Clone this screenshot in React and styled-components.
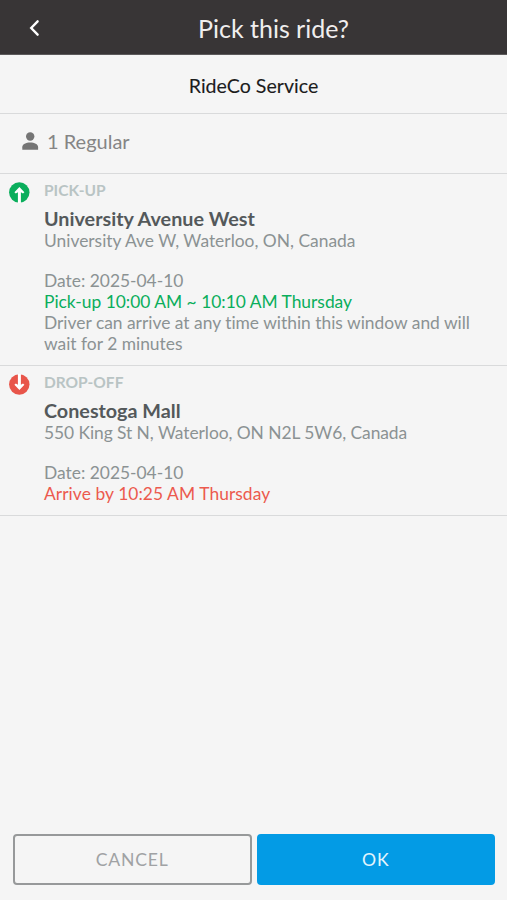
import React from "react";
import styled, { createGlobalStyle } from "styled-components";

const GlobalStyle = createGlobalStyle`
  * {
    box-sizing: border-box;
  }
  body {
    margin: 0;
    background: #f5f5f5;
    font-family: Lato, "Liberation Sans", sans-serif;
    font-variant-ligatures: none;
    color: #8b9293;
  }
`;

const Screen = styled.div`
  display: flex;
  flex-direction: column;
  width: 100%;
  height: 100vh;
`;

const Header = styled.header`
  display: grid;
  grid-template-columns: 40px 1fr;
  align-items: center;
  height: 55px;
  border-bottom: 1px solid #5c5a5b;
  background: #383536;
  color: #f0eeee;
`;

const BackButton = styled.button`
  display: flex;
  padding: 1px 0 0 29px;
  border: 0;
  background: none;
  color: #fff;
`;

const Title = styled.h1`
  margin: 2px 0 0;
  text-align: center;
  font-size: 25px;
  font-weight: 400;
  line-height: 30px;
`;

const Service = styled.div`
  display: flex;
  align-items: center;
  justify-content: center;
  height: 59px;
  padding-top: 3px;
  border-bottom: 1px solid #d9dadb;
  font-size: 19.6px;
  color: #1c1c1c;
  -webkit-text-stroke: 0.1px #1c1c1c;
`;

const Passengers = styled.div`
  display: flex;
  align-items: center;
  gap: 8px;
  height: 60px;
  padding: 0 22px 5px;
  border-bottom: 1px solid #d9dadb;
  font-size: 20px;
  color: #858585;
`;

const Stop = styled.section`
  display: flex;
  height: ${props => props.height};
  padding: 6px 9px 0;
  border-bottom: 1px solid #d9dadb;
`;

const StopIcon = styled.div`
  width: 35px;
  padding-top: 2px;
`;

const StopBody = styled.div`
  flex: 1;
  font-size: 17.4px;
  line-height: 21px;
`;

const StopLabel = styled.div`
  height: 27px;
  font-size: 15.5px;
  font-weight: 700;
  color: #b9c4c4;
`;

const Place = styled.h2`
  margin: 0;
  font-size: 19.75px;
  font-weight: 700;
  line-height: 23px;
  color: #54595b;
`;

const Address = styled.div`
  margin-bottom: 19px;
  letter-spacing: ${props => props.spacing || "normal"};
`;

const Time = styled.div`
  color: ${props => props.color};
  letter-spacing: ${props => props.spacing || "normal"};
`;

const Footer = styled.footer`
  display: flex;
  gap: 5px;
  margin-top: auto;
  padding: 0 12px 15px 13px;
`;

const Button = styled.button`
  flex: 1;
  height: 51px;
  padding: 0;
  border: 2px solid ${props => (props.primary ? "#039be5" : "#97999a")};
  border-radius: 4px;
  background: ${props => (props.primary ? "#039be5" : "transparent")};
  color: ${props => (props.primary ? "#e4f5fd" : "#a0a2a4")};
  font: 400 17.6px Lato, sans-serif;
  letter-spacing: 0.8px;
`;

const ArrowIcon = ({ color, down }) => (
  <svg width="21" height="21" viewBox="0 0 21 21">
    <circle cx="10.3" cy="10.5" r="10.2" fill={color} />
    <g transform={down ? "rotate(180 10.4 10.5)" : undefined} fill="#fff">
      <path d="M8.9 21V10.2L6.8 11.6L5.4 10.2L10.4 5L15.4 10.2L14 11.6L11.9 10.2V21Z" />
    </g>
  </svg>
);

const App = () => (
  <>
    <GlobalStyle />
    <Screen>
      <Header>
        <BackButton aria-label="Back">
          <svg width="14" height="22" viewBox="0 0 14 22" fill="none">
            <path
              d="M11 2.5L2.8 11L11 19.5"
              stroke="#fff"
              strokeWidth="3"
              strokeLinecap="round"
            />
          </svg>
        </BackButton>
        <Title>Pick this ride?</Title>
      </Header>
      <Service>RideCo Service</Service>
      <Passengers>
        <svg width="17" height="18" viewBox="0 0 17 18" fill="#757575">
          <circle cx="8.2" cy="4.5" r="4.2" />
          <path d="M0.3 17.7V15.2C0.3 12.3 4 10.6 8.2 10.6S16.1 12.3 16.1 15.2V17.7Z" />
        </svg>
        <span>1 Regular</span>
      </Passengers>
      <Stop height="192px">
        <StopIcon>
          <ArrowIcon color="#0aae5c" />
        </StopIcon>
        <StopBody>
          <StopLabel>PICK-UP</StopLabel>
          <Place>University Avenue West</Place>
          <Address>University Ave W, Waterloo, ON, Canada</Address>
          <div>Date: 2025-04-10</div>
          <Time color="#0aae5c">Pick-up 10:00 AM ~ 10:10 AM Thursday</Time>
          <div>
            Driver can arrive at any time within this window and will wait for 2
            minutes
          </div>
        </StopBody>
      </Stop>
      <Stop height="150px">
        <StopIcon>
          <ArrowIcon color="#e8554a" down />
        </StopIcon>
        <StopBody>
          <StopLabel>DROP-OFF</StopLabel>
          <Place>Conestoga Mall</Place>
          <Address spacing="-0.06px">
            550 King St N, Waterloo, ON N2L 5W6, Canada
          </Address>
          <div>Date: 2025-04-10</div>
          <Time color="#ec5a4e" spacing="0.07px">
            Arrive by 10:25 AM Thursday
          </Time>
        </StopBody>
      </Stop>
      <Footer>
        <Button>CANCEL</Button>
        <Button primary>OK</Button>
      </Footer>
    </Screen>
  </>
);

export default App;
